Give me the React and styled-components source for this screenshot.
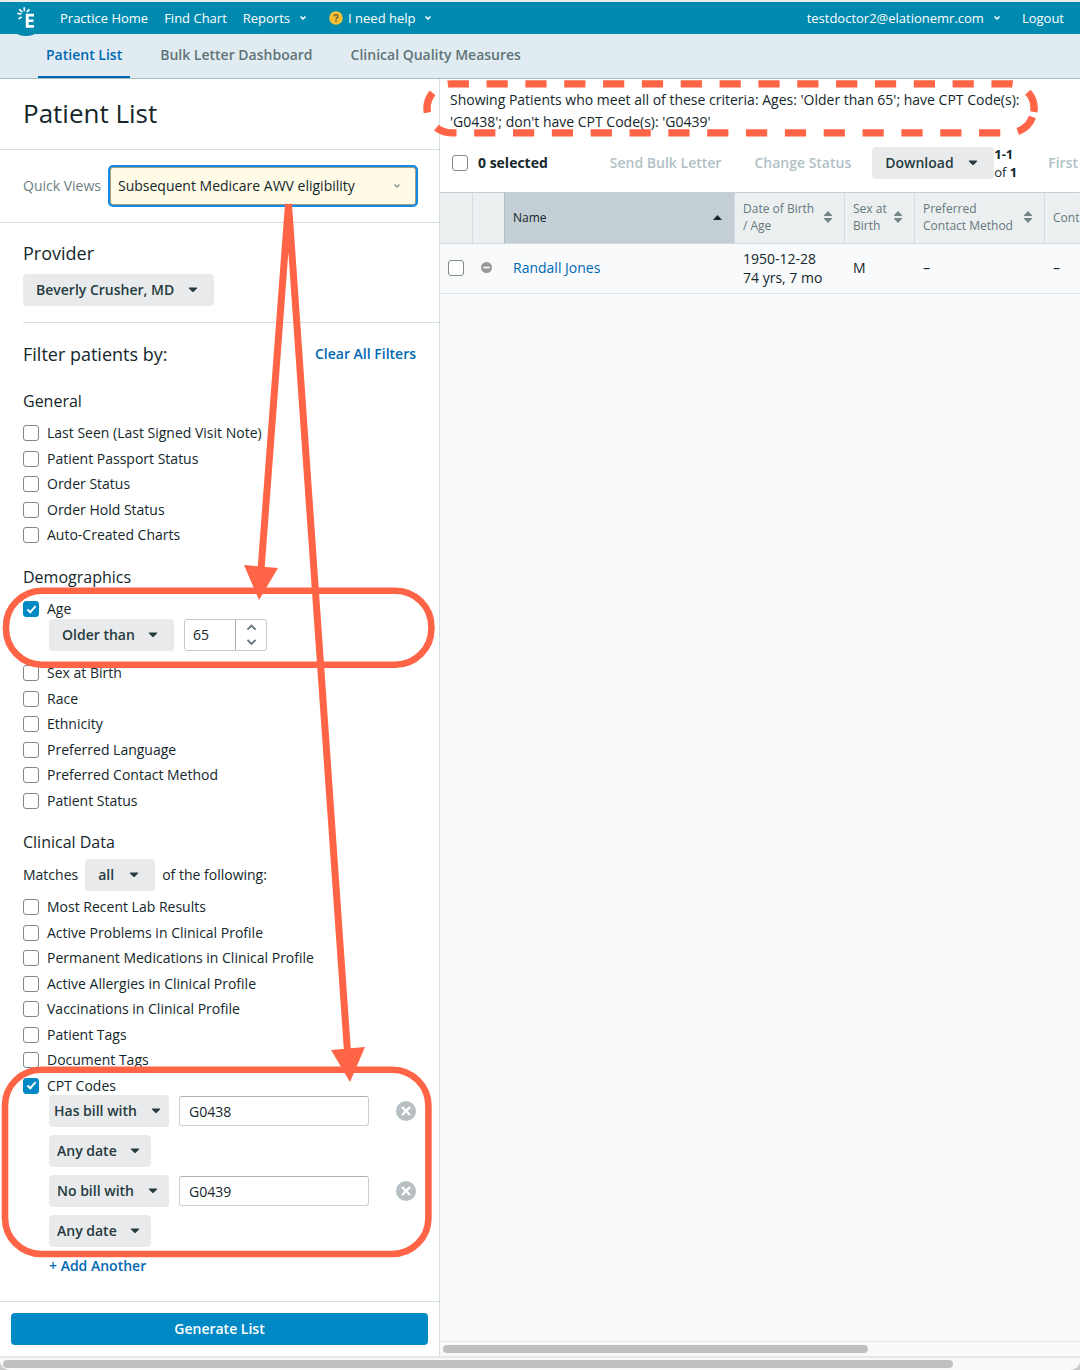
import React from "react";
import styled, { createGlobalStyle } from "styled-components";

const Global = createGlobalStyle`
  *, *::before, *::after { box-sizing: border-box; }
  body { margin: 0; background: #c9c9c9; }
  body, button, input, select, table {
    font-family: "Open Sans", "Noto Sans", sans-serif;
    font-size: 14px;
    line-height: 22px;
    color: #14272b;
  }
  h1, h2, h3, p, ul { margin: 0; padding: 0; font-weight: 400; }
  ul { list-style: none; }
  a { text-decoration: none; color: inherit; }
  button { border: 0; padding: 0; background: none; cursor: pointer; }
`;

const Page = styled.div`
  position: relative;
  display: flex;
  flex-direction: column;
  min-height: 100vh;
  overflow: hidden;
  background: #fff;
  border-top: 2px solid #ebebeb;
  border-radius: 0 0 10px 10px;
`;

const TopBar = styled.header`
  display: flex;
  align-items: center;
  justify-content: space-between;
  height: 32px;
  padding: 0 16px 0 6px;
  background: #008ab0;
  color: #fff;
`;

const TopGroup = styled.nav`
  display: flex;
  align-items: center;
  gap: ${(p) => p.$gap || 16}px;
  font-size: 13px;
`;

const TopItem = styled.button`
  display: flex;
  align-items: center;
  gap: ${(p) => p.$gap || 8}px;
  color: #fff;
  font-size: 13px;
  font-weight: 500;
`;

const Logo = styled.a`
  display: grid;
  place-items: center;
  align-self: flex-start;
  z-index: 1;
  width: 40px;
  height: 40px;
  margin: -4px -2px 0 0;
  border-radius: 50%;
  background: #008ab0;
`;

const HelpGroup = styled.div`
  margin-left: 7px;
`;

const SubNav = styled.nav`
  display: flex;
  gap: 22px;
  height: 45px;
  padding-left: 38px;
  background: #e1ecf2;
  border-bottom: 1px solid #a9bec2;
`;

const Tab = styled.a`
  display: flex;
  align-items: center;
  padding: 0 8px;
  border-bottom: 2px solid ${(p) => (p.$active ? "#0068b3" : "transparent")};
  color: ${(p) => (p.$active ? "#0068b3" : "#607478")};
  font-weight: 600;
`;

const Body = styled.div`
  display: flex;
  flex: 1;
`;

const Sidebar = styled.aside`
  display: flex;
  flex: 0 0 440px;
  flex-direction: column;
  border-right: 1px solid #d3dfe3;
`;

const TitleRow = styled.div`
  padding: 17px 23px 19px;
  border-bottom: 1px solid #d3dfe3;
`;

const Title = styled.h1`
  font-size: 26px;
  line-height: 34px;
`;

const QuickViews = styled.div`
  display: flex;
  align-items: center;
  gap: 9px;
  padding: 17px 23px;
  border-bottom: 1px solid #d3dfe3;
  label { color: #6d7f84; }
`;

const SelectShell = styled.span`
  display: inline-grid;
  align-items: center;
  flex: ${(p) => (p.$fill ? 1 : "none")};
  > * { grid-area: 1 / 1; }
  > svg {
    justify-self: end;
    margin-right: ${(p) => p.$caret || 16}px;
    pointer-events: none;
  }
`;

const QuickSelect = styled.select`
  appearance: none;
  width: 100%;
  height: 38px;
  padding: 0 7px;
  border: 1px solid #a39c80;
  border-radius: 3px;
  background: #fffbe6;
  outline: 0;
  box-shadow: 0 0 0 2px #118bea;
`;

const GreySelect = styled.select`
  appearance: none;
  width: ${(p) => p.$width}px;
  height: 32px;
  padding: 0 0 0 ${(p) => p.$pad || 13}px;
  border: 0;
  border-radius: 4px;
  background: #e8eaeb;
  color: #253b40;
  font-weight: 600;
`;

const Filters = styled.div`
  padding: 19px 0 0 23px;
`;

const Provider = styled.section`
  padding-bottom: 16px;
  border-bottom: 1px solid #d3dfe3;
`;

const Heading = styled.h2`
  margin-bottom: 10px;
  font-size: 18px;
  line-height: 22px;
`;

const FilterHead = styled.div`
  display: flex;
  align-items: center;
  justify-content: space-between;
  padding: 20px 23px 25px 0;
  ${Heading} { margin: 0; }
`;

const LinkButton = styled.button`
  color: #0068b3;
  font-weight: 600;
`;

const Group = styled.section`
  margin-bottom: 18px;
`;

const GroupTitle = styled.h3`
  margin-bottom: 8px;
  font-size: 16px;
`;

const Option = styled.li`
  display: flex;
  align-items: center;
  height: 26px;
  &:nth-child(even) { height: 25px; }
  label { display: flex; align-items: center; gap: 8px; }
`;

const Box = styled.input`
  appearance: none;
  display: grid;
  place-items: center;
  flex: none;
  width: 16px;
  height: 16px;
  margin: 0;
  border: 1px solid #81898c;
  border-radius: 3px;
  background: #fff;
  &:checked { border-color: #008ac5; background: #008ac5; }
  &:checked::after {
    content: "";
    width: 5px;
    height: 9px;
    margin-bottom: 2px;
    border: solid #fff;
    border-width: 0 2px 2px 0;
    transform: rotate(42deg);
  }
`;

const Detail = styled.div`
  display: flex;
  flex-direction: column;
  align-items: flex-start;
  gap: 8px;
  margin: -3px 0 9px 26px;
`;

const DetailRow = styled.div`
  display: flex;
  align-items: center;
  gap: 10px;
`;

const Stepper = styled.div`
  display: flex;
  width: 83px;
  height: 32px;
  border: 1px solid #c3cacc;
  border-radius: 3px;
`;

const StepInput = styled.input`
  flex: 1;
  min-width: 0;
  padding: 0 8px;
  border: 0;
  border-right: 1px solid #a5aeb1;
  background: none;
`;

const StepButtons = styled.div`
  display: grid;
  width: 30px;
  button { display: grid; place-items: center; }
`;

const CodeInput = styled.input`
  width: 190px;
  height: 30px;
  padding: 0 9px;
  border: 1px solid #cfcfcf;
  border-top-color: #aeb2b3;
  border-radius: 3px;
`;

const Remove = styled.button`
  display: flex;
  margin-left: 17px;
`;

const Matches = styled.p`
  display: flex;
  align-items: center;
  gap: 7px;
  margin: -2px 0 3px;
`;

const Footer = styled.footer`
  margin-top: auto;
  padding: 11px;
  border-top: 1px solid #d3dfe3;
`;

const Primary = styled.button`
  width: 100%;
  height: 32px;
  border-radius: 4px;
  background: #008ac5;
  color: #fff;
  font-weight: 600;
`;

const Main = styled.main`
  display: flex;
  flex: 1;
  flex-direction: column;
  min-width: 0;
  background: #f8fafc;
`;

const Criteria = styled.p`
  padding: 10px 10px 0;
  background: #fff;
`;

const Toolbar = styled.div`
  display: flex;
  align-items: center;
  height: 59px;
  padding-left: 12px;
  background: #fff;
  overflow: hidden;
  white-space: nowrap;
  label { display: flex; align-items: center; gap: 10px; margin-right: 62px; font-weight: 700; }
`;

const Ghost = styled.button`
  flex: none;
  margin-right: ${(p) => p.$gap || 0}px;
  color: #b1c1c6;
  font-weight: 600;
`;

const Download = styled.button`
  display: flex;
  flex: none;
  align-items: center;
  justify-content: space-between;
  width: 122px;
  height: 32px;
  padding: 0 16px 0 13px;
  border-radius: 4px;
  background: #e8eaeb;
  color: #253b40;
  font-weight: 600;
`;

const Range = styled.div`
  width: 54px;
  font-size: 13px;
  line-height: 18px;
`;

const Table = styled.table`
  width: 100%;
  table-layout: fixed;
  border-collapse: separate;
  border-spacing: 0;
`;

const Th = styled.th`
  height: 52px;
  padding: 0 8px 2px;
  border-top: 1px solid #c2d0d6;
  border-bottom: 1px solid #d3dbde;
  border-right: 1px solid ${(p) => (p.$last ? "transparent" : p.$edge || "#d3dbde")};
  background: ${(p) => (p.$active ? "#c3cfd4" : "#ebeff0")};
  color: ${(p) => (p.$active ? "#14272b" : "#66787d")};
  font-size: 12px;
  font-weight: 400;
  line-height: 17px;
  text-align: left;
  white-space: nowrap;
`;

const ThInner = styled.div`
  display: flex;
  align-items: center;
  justify-content: space-between;
  padding-right: 4px;
`;

const Td = styled.td`
  height: 50px;
  padding: 0 8px 2px;
  border-bottom: 1px solid #e0e5e7;
  line-height: 19px;
  a { color: #0068b3; }
`;

const Track = styled.div`
  height: ${(p) => p.$height}px;
  margin-top: ${(p) => (p.$push ? "auto" : 0)};
  padding: ${(p) => (p.$push ? 3 : 2)}px 3px;
  border-top: ${(p) => (p.$push ? 1 : 2)}px solid #e6e6e6;
  background: #f9f9f9;
`;

const Thumb = styled.div`
  width: ${(p) => p.$size}%;
  height: 8px;
  border-radius: 4px;
  background: #c0c0c0;
`;

const Markup = styled.svg`
  position: absolute;
  top: -2px;
  left: 0;
  pointer-events: none;
`;

const Caret = () => (
  <svg width="10" height="6" viewBox="0 0 10 6" fill="#253b40" aria-hidden="true">
    <path d="M1.2.5h7.6q.8.4.2 1L5.7 4.8q-.7.6-1.4 0L1 1.500Q.4.900 1.200.5z" />
  </svg>
);

const Chevron = ({ color = "#fff", size = 6, up, stroke = 1.5 }) => (
  <svg width={size} height={size / 2 + 1} viewBox="0 0 12 8" fill="none" stroke={color} strokeWidth={(stroke * 12) / size} aria-hidden="true">
    <path d={up ? "M1 7 6 2l5 5" : "M1 1l5 5 5-5"} />
  </svg>
);

const SortIcon = () => (
  <svg width="8" height="12" viewBox="0 0 8 12" fill="#768689" aria-hidden="true">
    <path d="M4 0 8 4.300v.7H0v-.7zM4 12 8 7.700V7H0v.7z" />
  </svg>
);

const SortUp = () => (
  <svg width="9" height="5" viewBox="0 0 9 5" fill="#14272b" aria-hidden="true">
    <path d="M4.500 0 9 5H0z" />
  </svg>
);

const LogoMark = () => (
  <svg width="40" height="40" viewBox="6 -2 40 40" fill="#fff" aria-hidden="true">
    <path d="M25.800 15.800H34v2.700h-5.300v2.900h4.800V24h-4.800v3h5.300v2.700h-8.200z" />
    <path d="m17.300 15.300 4.200.7M19.300 11.300l3 2.900M24.300 9.300v4M29.400 11.300l-2.700 2.900M18.600 20.900l3-1.900" stroke="#fff" strokeWidth="1.700" />
  </svg>
);

const HelpIcon = () => (
  <svg width="14" height="14" viewBox="0 0 14 14" fill="none" aria-hidden="true">
    <circle cx="7" cy="7" r="6.800" fill="#f9c033" />
    <path d="M5 5.400Q5.200 3.600 7 3.600t2 1.700Q9 6.300 8 6.900 7 7.500 7 8.400M7 9.600v1.500" stroke="#5c5a38" strokeWidth="1.400" />
  </svg>
);

const Minus = () => (
  <svg width="11" height="11" viewBox="0 0 11 11" aria-hidden="true">
    <circle cx="5.500" cy="5.500" r="5.500" fill="#999" />
    <path d="M2.300 5.500h6.400" stroke="#fff" strokeWidth="1.600" />
  </svg>
);

const Cross = () => (
  <svg width="20" height="20" viewBox="0 0 20 20" aria-hidden="true">
    <circle cx="10" cy="10" r="10" fill="#b7bfc2" />
    <path d="m6 6 8 8m0-8-8 8" stroke="#fff" strokeWidth="2.400" />
  </svg>
);

function Check({ label, checked }) {
  return (
    <Option>
      <label>
        <Box type="checkbox" defaultChecked={checked} />
        {label}
      </label>
    </Option>
  );
}

function Drop({ label, value, width, pad, caret }) {
  return (
    <SelectShell $caret={caret}>
      <GreySelect aria-label={label} $width={width} $pad={pad}>
        <option>{value}</option>
      </GreySelect>
      <Caret />
    </SelectShell>
  );
}

function CodeFilter({ mode, code, pad, caret }) {
  return (
    <>
      <DetailRow>
        <Drop label="Bill rule" value={mode} width={120} pad={pad} caret={caret} />
        <CodeInput aria-label="CPT code" defaultValue={code} />
        <Remove aria-label="Remove code"><Cross /></Remove>
      </DetailRow>
      <Drop label="Bill date" value="Any date" width={102} pad={8} caret={11} />
    </>
  );
}

const general = ["Last Seen (Last Signed Visit Note)", "Patient Passport Status", "Order Status", "Order Hold Status", "Auto-Created Charts"];
const demographics = ["Sex at Birth", "Race", "Ethnicity", "Preferred Language", "Preferred Contact Method", "Patient Status"];
const clinical = [
  "Most Recent Lab Results",
  "Active Problems in Clinical Profile",
  "Permanent Medications in Clinical Profile",
  "Active Allergies in Clinical Profile",
  "Vaccinations in Clinical Profile",
  "Patient Tags",
  "Document Tags",
];

export default function App() {
  return (
    <>
      <Global />
      <Page>
        <TopBar>
          <TopGroup>
            <Logo href="#" aria-label="Home"><LogoMark /></Logo>
            <TopItem>Practice Home</TopItem>
            <TopItem>Find Chart</TopItem>
            <TopItem $gap={10}>Reports <Chevron /></TopItem>
            <HelpGroup>
              <TopItem $gap={10}>
                <TopItem as="span" $gap={5}><HelpIcon />I need help</TopItem>
                <Chevron />
              </TopItem>
            </HelpGroup>
          </TopGroup>
          <TopGroup $gap={22}>
            <TopItem $gap={10}>testdoctor2@elationemr.com <Chevron /></TopItem>
            <TopItem>Logout</TopItem>
          </TopGroup>
        </TopBar>
        <SubNav>
          <Tab href="#" $active>Patient List</Tab>
          <Tab href="#">Bulk Letter Dashboard</Tab>
          <Tab href="#">Clinical Quality Measures</Tab>
        </SubNav>
        <Body>
          <Sidebar>
            <TitleRow><Title>Patient List</Title></TitleRow>
            <QuickViews>
              <label htmlFor="quick-view">Quick Views</label>
              <SelectShell $fill $caret={16}>
                <QuickSelect id="quick-view">
                  <option>Subsequent Medicare AWV eligibility</option>
                </QuickSelect>
                <Chevron color="#8c979a" />
              </SelectShell>
            </QuickViews>
            <Filters>
              <Provider>
                <Heading>Provider</Heading>
                <Drop label="Provider" value="Beverly Crusher, MD" width={191} />
              </Provider>
              <FilterHead>
                <Heading>Filter patients by:</Heading>
                <LinkButton>Clear All Filters</LinkButton>
              </FilterHead>
              <Group>
                <GroupTitle>General</GroupTitle>
                <ul>{general.map((t) => <Check key={t} label={t} />)}</ul>
              </Group>
              <Group>
                <GroupTitle>Demographics</GroupTitle>
                <ul><Check label="Age" checked /></ul>
                <Detail>
                  <DetailRow>
                    <Drop label="Age rule" value="Older than" width={125} />
                    <Stepper>
                      <StepInput aria-label="Age" defaultValue="65" />
                      <StepButtons>
                        <button aria-label="Increase"><Chevron up color="#64757a" size={11} stroke={2} /></button>
                        <button aria-label="Decrease"><Chevron color="#64757a" size={11} stroke={2} /></button>
                      </StepButtons>
                    </Stepper>
                  </DetailRow>
                </Detail>
                <ul>{demographics.map((t) => <Check key={t} label={t} />)}</ul>
              </Group>
              <Group>
                <GroupTitle>Clinical Data</GroupTitle>
                <Matches>
                  Matches
                  <Drop label="Match mode" value="all" width={70} />
                  of the following:
                </Matches>
                <ul>
                  {clinical.map((t) => <Check key={t} label={t} />)}
                  <Check label="CPT Codes" checked />
                </ul>
                <Detail>
                  <CodeFilter mode="Has bill with" code="G0438" pad={5} caret={8} />
                  <CodeFilter mode="No bill with" code="G0439" pad={8} caret={11} />
                  <LinkButton>+ Add Another</LinkButton>
                </Detail>
              </Group>
            </Filters>
            <Footer><Primary>Generate List</Primary></Footer>
          </Sidebar>
          <Main>
            <Criteria>
              Showing Patients who meet all of these criteria: Ages: 'Older than 65'; have CPT Code(s): 'G0438'; don't have CPT Code(s): 'G0439'
            </Criteria>
            <Toolbar>
              <label><Box type="checkbox" />0 selected</label>
              <Ghost $gap={33}>Send Bulk Letter</Ghost>
              <Ghost $gap={21}>Change Status</Ghost>
              <Download>Download <Caret /></Download>
              <Range><b>1-1</b><br />of <b>1</b></Range>
              <Ghost>First</Ghost>
            </Toolbar>
            <Table>
              <colgroup>
                <col width="33" /><col width="32" /><col width="230" /><col width="110" /><col width="70" /><col width="130" /><col />
              </colgroup>
              <thead>
                <tr>
                  <Th aria-label="Select" />
                  <Th $edge="#adbec2" aria-label="State" />
                  <Th $active><ThInner>Name <SortUp /></ThInner></Th>
                  <Th><ThInner><span>Date of Birth<br />/ Age</span><SortIcon /></ThInner></Th>
                  <Th><ThInner><span>Sex at<br />Birth</span><SortIcon /></ThInner></Th>
                  <Th><ThInner><span>Preferred<br />Contact Method</span><SortIcon /></ThInner></Th>
                  <Th $last>Cont</Th>
                </tr>
              </thead>
              <tbody>
                <tr>
                  <Td><Box type="checkbox" aria-label="Select Randall Jones" /></Td>
                  <Td><Minus /></Td>
                  <Td><a href="#">Randall Jones</a></Td>
                  <Td>1950-12-28<br />74 yrs, 7 mo</Td>
                  <Td>M</Td>
                  <Td>–</Td>
                  <Td>–</Td>
                </tr>
              </tbody>
            </Table>
            <Track $push $height={15}><Thumb $size={67} /></Track>
          </Main>
        </Body>
        <Track $height={14}><Thumb $size={88.5} /></Track>
        <Markup width="1080" height="1370" viewBox="0 0 1080 1370" fill="none" stroke="#ff6446" aria-hidden="true">
          <path
            d="M1032.500 117A24.500 24.500 0 0 1 1009.500 132.850H451.500A24.500 24.500 0 0 1 451.500 83.850H1009.500A24.500 24.500 0 0 1 1032.500 117"
            strokeWidth="7.400"
            strokeDasharray="21.200 17.640"
          />
          <rect x="6" y="590.700" width="425.400" height="74" rx="36" strokeWidth="6.600" />
          <rect x="5" y="1069.700" width="423.400" height="184.300" rx="36" strokeWidth="6.600" />
          <path d="M288.500 204 261 570M288.500 204 347.500 1052" strokeWidth="7" />
          <path d="m244 565 34 3-19 32zM331 1050l34-3-15 35z" fill="#ff6446" stroke="none" />
        </Markup>
      </Page>
    </>
  );
}
